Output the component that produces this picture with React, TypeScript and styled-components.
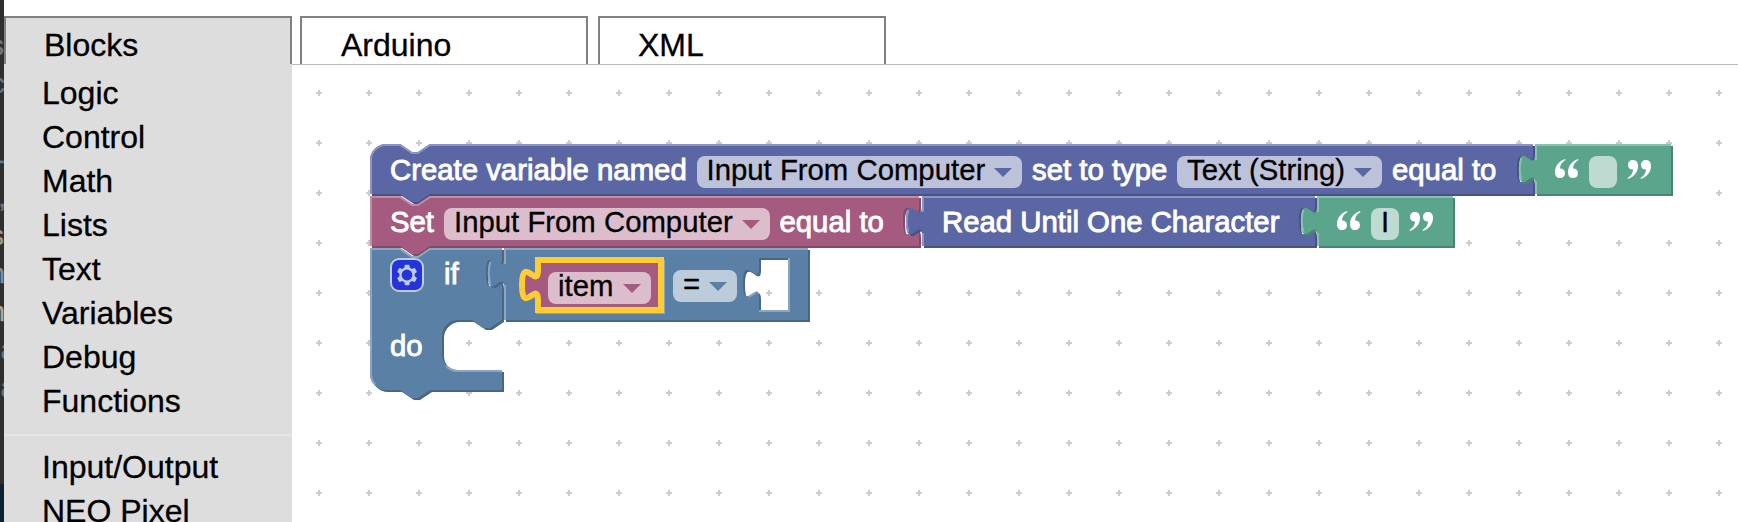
import React from 'react';
import styled, { createGlobalStyle } from 'styled-components';

const Global = createGlobalStyle`
  * { box-sizing: border-box; }
  html, body { margin: 0; height: 522px; overflow: hidden; background: #fff; }
  body {
    font-family: "Liberation Sans", Arial, sans-serif;
    color: #000;
    -webkit-text-stroke: 0.3px currentColor;
  }
`;

const Page = styled.div`
  display: flex;
  width: 1738px;
  height: 522px;
  overflow: hidden;
`;

const Edge = styled.div`
  display: flex;
  flex-direction: column;
  width: 4px;
  flex: none;
  padding-top: 27px;
  background: #2f2f2f;
  overflow: hidden;
`;

const EdgeLine = styled.span<{ $c: string; $cut: number }>`
  display: flex;
  justify-content: flex-end;
  flex: none;
  height: 38px;
  margin-right: ${(p) => p.$cut}px;
  color: ${(p) => p.$c};
  font-size: 28px;
  line-height: 38px;
`;

const EdgeFoot = styled.div`
  flex: none;
  height: 38px;
  margin-top: auto;
  background: #0b2233;
`;

const Main = styled.div`
  flex: 1;
  display: flex;
  flex-direction: column;
`;

const Tabs = styled.div`
  display: flex;
  height: 64px;
  padding-top: 16px;
  gap: 8px;
`;

const Tab = styled.div<{ $active?: boolean; $left: number }>`
  width: 288px;
  height: 48px;
  padding: 9px 0 0 ${(p) => p.$left}px;
  border: 2px solid #808080;
  border-bottom: 0;
  background: ${(p) => (p.$active ? '#ddd' : '#fff')};
  font-size: 32px;
  line-height: 36px;
  white-space: nowrap;
  & + & { margin-right: 2px; }
`;

const Body = styled.div`
  display: flex;
  flex: 1;
  min-height: 0;
`;

const Toolbox = styled.nav`
  width: 288px;
  flex: none;
  background: #ddd;
  padding-top: 7px;
`;

const Category = styled.div`
  height: 44px;
  padding-left: 38px;
  font-size: 32px;
  line-height: 44px;
  white-space: nowrap;
`;

const Separator = styled.div`
  height: 2px;
  margin: 11px 0 9px;
  background: #e5e5e5;
`;

const Workspace = styled.main`
  position: relative;
  flex: 1;
  border-top: 1px solid #bbb;
  overflow: hidden;
`;

const Grid = styled.svg`
  display: block;
  width: 100%;
  height: 100%;
`;

const Block = styled.div<{ $x: number; $y: number }>`
  position: absolute;
  left: ${(p) => p.$x - 292}px;
  top: ${(p) => p.$y - 65}px;
`;

const Shape = styled.svg`
  position: absolute;
  left: 0;
  top: 0;
  width: 1px;
  height: 1px;
  overflow: visible;
`;

const Row = styled.div<{ $left: number; $top?: number }>`
  position: relative;
  display: flex;
  align-items: center;
  height: 32px;
  margin-top: ${(p) => p.$top ?? 12}px;
  margin-left: ${(p) => p.$left}px;
`;

const Label = styled.span<{ $w: number; $gap?: number; $raise?: number }>`
  flex: none;
  width: ${(p) => p.$w}px;
  margin-right: ${(p) => p.$gap ?? 0}px;
  padding-bottom: ${(p) => p.$raise ?? 4}px;
  color: #fff;
  font-size: 29.33px;
  line-height: 28px;
  white-space: nowrap;
  -webkit-text-stroke: 0.9px #fff;
`;

const Field = styled.span<{ $w: number; $gap?: number }>`
  flex: none;
  display: flex;
  align-items: center;
  justify-content: space-between;
  width: ${(p) => p.$w}px;
  height: 32px;
  margin-right: ${(p) => p.$gap ?? 0}px;
  padding: 0 10px 4px;
  border-radius: 8px;
  background: rgba(255, 255, 255, 0.6);
  font-size: 29.33px;
  line-height: 28px;
  white-space: nowrap;
`;

const Arrow = styled.span<{ $c: string }>`
  margin-top: 4px;
  border: 9px solid transparent;
  border-top-color: ${(p) => p.$c};
  border-bottom: 0;
`;

const QuoteMark = styled.svg<{ $gap?: number }>`
  flex: none;
  width: 24px;
  height: 24px;
  margin-bottom: 5px;
  margin-right: ${(p) => p.$gap ?? 0}px;
`;

const Gear = styled.svg`
  flex: none;
  width: 34px;
  height: 34px;
  margin-right: 20px;
`;

type Tone = { base: string; light: string; dark: string };
const indigo: Tone = { base: '#5b67a5', light: '#8c95c0', dark: '#495284' };
const plum: Tone = { base: '#a55b80', light: '#c08ca6', dark: '#844966' };
const green: Tone = { base: '#5ba58c', light: '#8cc0ae', dark: '#498470' };
const steel: Tone = { base: '#5b80a5', light: '#8ca6c0', dark: '#496684' };

const NOTCH = 'l 6,4 3,0 6,-4';
const NOTCH_BACK = 'l -6,4 -3,0 -6,-4';
const TAB_DOWN = 'v 5 c 0,10 -8,-8 -8,7.5 s 8,-2.5 8,7.5';
const TAB_UP = 'V 20 c 0,-10 -8,8 -8,-7.5 s 8,2.5 8,-7.5';

function Outline({ tone, d, light, selected }: { tone: Tone; d: string; light: string; selected?: boolean }) {
  return (
    <Shape>
      <g transform="scale(2)" fillRule="evenodd">
        {!selected && <path d={d} fill={tone.dark} transform="translate(1,1)" />}
        <path d={d} fill={tone.base} stroke={selected ? '#fc3' : 'none'} strokeWidth={3} />
        {!selected && <path d={light} fill="none" stroke={tone.light} strokeWidth={1} />}
      </g>
    </Shape>
  );
}

const outputBlock = (w: number, h: number) => `M 0,0 H ${w} V ${h} H 0 ${TAB_UP} z`;
const outputLight = (w: number, h: number) =>
  `M 0.5,${h} V 18.5 m -7.36,-0.5 q -1.52,-5.5 0,-11 m 7.36,1 V 0.5 H ${w}`;
const socketLight = (x: number) => `M ${x - 5},19.3 l 3.68,-2.1`;

function Quote({ close, gap }: { close?: boolean; gap?: number }) {
  const mark = 'M10 1 C4 3 0 8 0 14 C0 18 2 20 5 20 C8 20 10 18 10 15 C10 12 8 10.5 5 10.5 C5 7 7 4 10.5 2 Z';
  return (
    <QuoteMark viewBox="0 0 24 24" $gap={gap}>
      <g fill="#fff" transform={close ? 'rotate(180 12 11)' : undefined}>
        <path d={mark} />
        <path d={mark} transform="translate(13 0)" />
      </g>
    </QuoteMark>
  );
}

const GEAR_PATH =
  'm4.203,7.296 0,1.368 -0.92,0.677 -0.11,0.41 0.9,1.579 0.41,0.11 1.043,-0.457 1.187,0.683 0.127,1.134 0.3,0.3 1.8,0 0.3,-0.299 0.127,-1.138 1.185,-0.682 1.046,0.458 0.409,-0.11 0.9,-1.579 -0.11,-0.41 -0.92,-0.677 0,-1.366 0.92,-0.677 0.11,-0.41 -0.9,-1.579 -0.409,-0.109 -1.046,0.458 -1.185,-0.682 -0.127,-1.138 -0.3,-0.299 -1.8,0 -0.3,0.3 -0.126,1.135 -1.187,0.682 -1.043,-0.457 -0.41,0.11 -0.899,1.579 0.108,0.409z';

const categories = ['Logic', 'Control', 'Math', 'Lists', 'Text', 'Variables', 'Debug', 'Functions'];

const edgeLines: [string, string, number][] = [
  ['s', '#777', 0],
  ['c', '#5f7488', -1],
  ['', '#777', 0],
  ['-', '#5f7488', -1],
  [',', '#777', -2],
  ['s', '#a09a90', 0],
  ['n', '#7c8ea0', -1],
  ['n', '#b5a58f', -1],
  ['a', '#5f7488', -12],
  ['a', '#5f7488', -12],
];

export default function App() {
  return (
    <>
      <Global />
      <Page>
        <Edge aria-hidden>
          {edgeLines.map(([t, c, cut], i) => <EdgeLine key={i} $c={c} $cut={cut}>{t}</EdgeLine>)}
          <EdgeFoot />
        </Edge>
        <Main>
          <Tabs>
            <Tab $active $left={38}>Blocks</Tab>
            <Tab $left={39}>Arduino</Tab>
            <Tab $left={38}>XML</Tab>
          </Tabs>
          <Body>
            <Toolbox>
              {categories.map((c) => <Category key={c}>{c}</Category>)}
              <Separator />
              <Category>Input/Output</Category>
              <Category>NEO Pixel</Category>
            </Toolbox>
            <Workspace>
              <Grid>
                <defs>
                  <pattern id="grid" x="2" y="3" width="50" height="50" patternUnits="userSpaceOnUse">
                    <path d="M22 25H28M25 22V28" stroke="#ccc" strokeWidth="2" />
                  </pattern>
                </defs>
                <rect width="100%" height="100%" fill="url(#grid)" />
              </Grid>

              <Block $x={370} $y={144}>
                <Outline
                  tone={indigo}
                  d={`M 0,8 A 8,8 0 0,1 8,0 H 15 ${NOTCH} H 581.5 ${TAB_DOWN} V 25 H 30 ${NOTCH_BACK} H 0 z`}
                  light={`M 0.5,25 V 8 A 7.5,7.5 0 0,1 8,0.5 H 15 ${NOTCH} H 581.5 ${socketLight(581.5)}`}
                />
                <Row $left={20}>
                  <Label $w={296.5} $gap={10}>Create variable named</Label>
                  <Field $w={325.5} $gap={10}>Input From Computer<Arrow $c={indigo.base} /></Field>
                  <Label $w={135} $gap={10}>set to type</Label>
                  <Field $w={205} $gap={10}>Text (String)<Arrow $c={indigo.base} /></Field>
                  <Label $w={105}>equal to</Label>
                </Row>
              </Block>
              <Block $x={1535} $y={144}>
                <Outline tone={green} d={outputBlock(68, 25)} light={outputLight(68, 25)} />
                <Row $left={20}><Quote gap={10} /><Field $w={28} $gap={10} /><Quote close /></Row>
              </Block>

              <Block $x={370} $y={196}>
                <Outline
                  tone={plum}
                  d={`M 0,0 H 15 ${NOTCH} H 274.5 ${TAB_DOWN} V 25 H 30 ${NOTCH_BACK} H 0 z`}
                  light={`M 0.5,25 V 0.5 H 15 ${NOTCH} H 274.5 ${socketLight(274.5)}`}
                />
                <Row $left={20}>
                  <Label $w={44} $gap={10}>Set</Label>
                  <Field $w={325.5} $gap={10}>Input From Computer<Arrow $c={plum.base} /></Field>
                  <Label $w={105}>equal to</Label>
                </Row>
              </Block>
              <Block $x={922} $y={196}>
                <Outline
                  tone={indigo}
                  d={`M 0,0 H 196.5 ${TAB_DOWN} V 25 H 0 ${TAB_UP} z`}
                  light={`${outputLight(196.5, 25)} ${socketLight(196.5)}`}
                />
                <Row $left={20}><Label $w={338}>Read Until One Character</Label></Row>
              </Block>
              <Block $x={1317} $y={196}>
                <Outline tone={green} d={outputBlock(68, 25)} light={outputLight(68, 25)} />
                <Row $left={20}><Quote gap={10} /><Field $w={28} $gap={10}>I</Field><Quote close /></Row>
              </Block>

              <Block $x={370} $y={248}>
                <Outline
                  tone={steel}
                  d={`M 0,0 H 15 ${NOTCH} H 66 ${TAB_DOWN} V 36 l -6,4 h -3 l -6,-4 h -7 a 8,8 0 0,0 -8,8 v 9 a 8,8 0 0,0 8,8 H 66 V 71 H 30 ${NOTCH_BACK} H 8 a 8,8 0 0,1 -8,-8 z`}
                  light={`M 2.7,68.3 A 7.5,7.5 0 0,1 0.5,63 V 0.5 H 15 ${NOTCH} H 66 ${socketLight(66)} M 38,59 a 8.5,8.5 0 0,0 6,2.5 H 66`}
                />
                <Row $left={20} $top={11}>
                  <Gear viewBox="0 0 17 17">
                    <g transform="translate(.5 .5)" opacity=".6">
                      <rect width="16" height="16" rx="4" fill="#00f" stroke="#fff" />
                      <path d={GEAR_PATH} fill="#fff" />
                      <circle cx="8" cy="8" r="2.7" fill="#00f" />
                    </g>
                  </Gear>
                  <Label $w={20} $raise={2}>if</Label>
                </Row>
                <Row $left={20} $top={40}><Label $w={40} $raise={2}>do</Label></Row>
              </Block>
              <Block $x={504} $y={248}>
                <Outline
                  tone={steel}
                  d={`${outputBlock(152, 36)} M 142,5 h -14.5 ${TAB_DOWN} v 6 h 14.5 z`}
                  light={`${outputLight(152, 36)} M 80,6 V 32.5 H 16 M 142.5,5 V 31.5 H 127.5 M 122.5,24.3 l 3.68,-2.1`}
                />
                <Row $left={169} $top={22}><Field $w={64}>=<Arrow $c={steel.base} /></Field></Row>
              </Block>
              <Block $x={538} $y={260}>
                <Outline selected tone={plum} d={outputBlock(61.5, 25)} light="" />
                <Row $left={10}><Field $w={103}>item<Arrow $c={plum.base} /></Field></Row>
              </Block>
            </Workspace>
          </Body>
        </Main>
      </Page>
    </>
  );
}
